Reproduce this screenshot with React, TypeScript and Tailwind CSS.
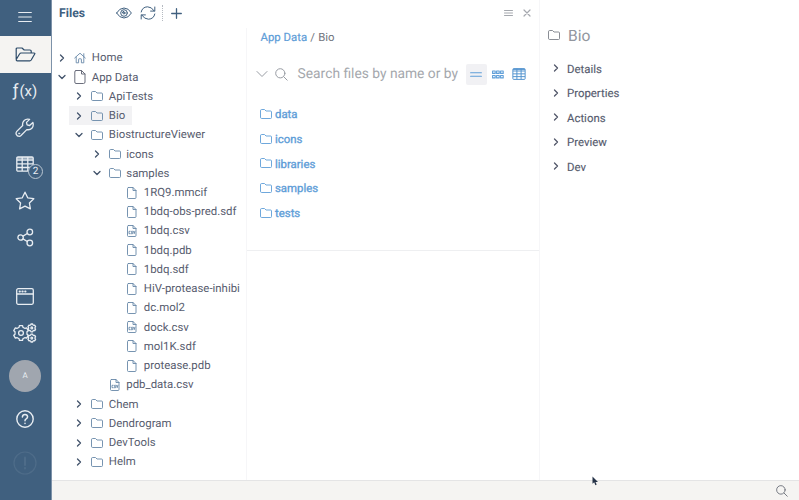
import type { ReactNode } from "react";

type IconProps = { className?: string };

function Svg({ w, h, children, className = "", sw = 1 }: { w: number; h: number; children: ReactNode; className?: string; sw?: number }) {
  return (
    <svg width={w} height={h} viewBox={`0 0 ${w} ${h}`} fill="none" stroke="currentColor" strokeWidth={sw} strokeLinecap="round" strokeLinejoin="round" className={`block shrink-0 ${className}`}>
      {children}
    </svg>
  );
}

const Chevron = ({ open, className = "" }: { open?: boolean; className?: string }) => (
  <Svg w={8} h={8} sw={1.3} className={className}>
    {open ? <path d="M1 2.5 4 5.5 7 2.5" /> : <path d="M2.5 1 5.5 4 2.5 7" />}
  </Svg>
);

const Folder = ({ className = "" }: IconProps) => (
  <Svg w={12} h={10} sw={0.9} className={className}>
    <path d="M.5 1.5Q.5.5 1.5.5H4.5L6 2H10.5Q11.5 2 11.5 3V8.5Q11.5 9.5 10.5 9.5H1.5Q.5 9.5.5 8.5Z" />
  </Svg>
);

const File = ({ csv }: { csv?: boolean }) => (
  <Svg w={10} h={12} sw={0.9}>
    <path d="M1.5.5H6L9 3.5V10.5Q9 11.5 8 11.5H1.5Q.5 11.5.5 10.5V1.5Q.5.5 1.5.5ZM6 .5V3.5H9" />
    {csv && <path strokeWidth=".9" d="M3.2 6.3H2V8.7H3.2M5.5 6.3H4.5V7.5H5.5V8.7H4.3M6.6 6.3 7.2 8.7 7.9 6.3" />}
  </Svg>
);

const BigFile = () => (
  <Svg w={12} h={14} sw={1}>
    <path d="M2 .5H7.5L11 4V12Q11 13.5 9.5 13.5H2Q.8 13.5.8 12V2Q.8.5 2 .5ZM7.5.5V4H11" />
  </Svg>
);

const Home = () => (
  <Svg w={12} h={12} sw={0.9}>
    <path d="M.7 6 6 1.2 11.3 6M2.2 5V10.8H4.6V7.3Q4.6 6.8 5.1 6.8H6.9Q7.4 6.8 7.4 7.3V10.8H9.8V5M9.8 4.4V1.7" />
  </Svg>
);

const Search = ({ size, className = "" }: { size: number; className?: string }) => (
  <svg width={size} height={size} viewBox="0 0 13 13" fill="none" stroke="currentColor" strokeWidth="1" strokeLinecap="round" className={`block shrink-0 ${className}`}>
    <circle cx="5.3" cy="5.3" r="4.6" />
    <path d="m8.8 8.8 3.4 3.4" />
  </svg>
);

const Table = ({ w, h, sw }: { w: number; h: number; sw: number }) => (
  <svg width={w} height={h} viewBox="0 0 18 16" fill="none" stroke="currentColor" strokeWidth={sw} className="block shrink-0">
    <rect x=".8" y=".8" width="16.4" height="14.4" rx="1.2" />
    <path d="M1 4H17M1 7.8H17M1 11.5H17M6.2 1V15M11.8 1V15" />
    <path d="M1 1.9H17" />
  </svg>
);

const Menu = () => <Svg w={14} h={12} sw={1.2}><path d="M.7 1.5H13.3M.7 6H13.3M.7 10.5H13.3" /></Svg>;
const OpenFolder = () => (
  <Svg w={21} h={15} sw={1.2}>
    <path d="M1.2 12V2Q1.2 1 2.2 1H7L9.2 3H15Q16.2 3 16.2 4V6M1.2 12.5 4.7 6.7Q5.1 6 6 6H19Q20.3 6 19.7 7L16.2 13Q15.7 13.8 14.8 13.8H2.2Q1.2 13.8 1.2 12.5" />
  </Svg>
);
const Wrench = () => (
  <Svg w={20} h={20} sw={1.3}>
    <path d="M17.9 4.5 14.6 7.5 12.1 6.9 11.5 4.4 14.6 1.4Q11.4.3 9.2 2.5T7.7 7.5L1.8 13.4Q.7 14.8 1.2 16.2 2 18.3 4.3 18.3 5.2 18.2 6 17.5L11.8 11.6Q14.9 12.3 16.9 10.2T17.9 4.5Z" />
    <circle cx="4.1" cy="15.5" r=".6" strokeWidth=".8" />
  </Svg>
);
const Star = () => <Svg w={20} h={19} sw={1.3}><path d="M10 1.2 12.7 6.8 18.8 7.7 14.4 12 15.4 17.9 10 15.1 4.6 17.9 5.6 12 1.2 7.7 7.3 6.8Z" /></Svg>;
const Share = () => (
  <Svg w={17} h={19} sw={1.3}>
    <circle cx="3.6" cy="9.5" r="2.7" /><circle cx="12.8" cy="4" r="2.8" /><circle cx="12.8" cy="15" r="2.8" />
    <path d="m6 8.1 4.3-2.6M6 10.9l4.3 2.6" />
  </Svg>
);
const WindowIcon = () => (
  <Svg w={18} h={17} sw={1.3}>
    <rect x=".7" y=".7" width="16.6" height="15.6" rx="1.5" />
    <path d="M1 6H17" /><path strokeWidth="1.8" d="M3.5 3.5H4M6.3 3.5H6.8M9.1 3.5H9.6" />
  </Svg>
);

function gearPath(cx: number, cy: number, r: number, teeth: number, depth: number) {
  const pts: string[] = [];
  const step = (Math.PI * 2) / teeth;
  for (let i = 0; i < teeth; i++) {
    const a = i * step - Math.PI / 2;
    [[-0.3, -depth], [-0.2, 0], [0.2, 0], [0.3, -depth]].forEach(([k, d]) => {
      pts.push(`${(cx + (r + d) * Math.cos(a + k * step)).toFixed(2)} ${(cy + (r + d) * Math.sin(a + k * step)).toFixed(2)}`);
    });
  }
  return `M${pts.join("L")}Z`;
}
const Gears = () => (
  <Svg w={24} h={20} sw={1.3}>
    <path d={gearPath(8, 10, 7.6, 6, 1.5)} /><circle cx="8" cy="10" r="2.4" />
    <path d={gearPath(18.8, 4.9, 4, 6, 0.7)} /><circle cx="18.8" cy="4.9" r=".9" />
    <path d={gearPath(18.8, 15.1, 4, 6, 0.7)} /><circle cx="18.8" cy="15.1" r=".9" />
  </Svg>
);
const Help = () => (
  <Svg w={18} h={18} sw={1.4}>
    <circle cx="9" cy="9" r="8.2" />
    <path d="M6.4 7Q6.6 4.5 9 4.5T11.6 6.8Q11.6 7.9 10.2 8.8 9 9.5 9 10.7M9 13.3V13.5" strokeWidth="1.5" />
  </Svg>
);
const Eye = () => (
  <Svg w={16} h={12} sw={1}>
    <path d="M.6 6Q3.5 1 8 1T15.4 6Q12.5 11 8 11T.6 6Z" /><circle cx="8" cy="6" r="3.3" /><circle cx="8" cy="6" r="1" /><path d="M6.4 5.5Q6.5 4.3 7.7 4.3" />
  </Svg>
);
const Refresh = () => (
  <Svg w={16} h={14} sw={1}>
    <path d="M1.2 6Q2.2 1 7.5.8 11.5.7 14.3 5M14.8 1V5.1H10.6M14.8 8Q13.8 13 8.5 13.2 4.5 13.3 1.7 9M1.2 13V8.9H5.4" />
  </Svg>
);

type Node = { label: string; level: number; kind: "home" | "app" | "folder" | "file" | "csv"; open?: boolean; selected?: boolean };
const nodes: Node[] = [
  { label: "Home", level: 0, kind: "home" },
  { label: "App Data", level: 0, kind: "app", open: true },
  { label: "ApiTests", level: 1, kind: "folder" },
  { label: "Bio", level: 1, kind: "folder", selected: true },
  { label: "BiostructureViewer", level: 1, kind: "folder", open: true },
  { label: "icons", level: 2, kind: "folder" },
  { label: "samples", level: 2, kind: "folder", open: true },
  { label: "1RQ9.mmcif", level: 3, kind: "file" },
  { label: "1bdq-obs-pred.sdf", level: 3, kind: "file" },
  { label: "1bdq.csv", level: 3, kind: "csv" },
  { label: "1bdq.pdb", level: 3, kind: "file" },
  { label: "1bdq.sdf", level: 3, kind: "file" },
  { label: "HiV-protease-inhibi", level: 3, kind: "file" },
  { label: "dc.mol2", level: 3, kind: "file" },
  { label: "dock.csv", level: 3, kind: "csv" },
  { label: "mol1K.sdf", level: 3, kind: "file" },
  { label: "protease.pdb", level: 3, kind: "file" },
  { label: "pdb_data.csv", level: 2, kind: "csv" },
  { label: "Chem", level: 1, kind: "folder" },
  { label: "Dendrogram", level: 1, kind: "folder" },
  { label: "DevTools", level: 1, kind: "folder" },
  { label: "Helm", level: 1, kind: "folder" },
];
const indents = ["pl-0", "pl-0", "pl-[17.5px]", "pl-[35px]"];

function TreeRow({ node }: { node: Node }) {
  const isFile = node.kind === "file" || node.kind === "csv";
  return (
    <div className={`flex h-[19.24px] ${node.level ? "pl-[17px]" : ""}`}>
      <div className={`flex items-center ${indents[node.level]} ${node.selected ? "bg-[#f2f2f4] pr-[7px]" : ""}`}>
        <span className="flex w-[19.8px] pl-[6px]">{!isFile && <Chevron open={node.open} className="text-[#42536b]" />}</span>
        <span className="mr-[0.5px] flex w-[19.5px] justify-center pr-[3px] text-[#6888a8]">
          {node.kind === "home" ? <Home /> : node.kind === "app" ? <span className="text-[#6b6e7c]"><BigFile /></span> : isFile ? <File csv={node.kind === "csv"} /> : <Folder />}
        </span>
        <span className="whitespace-nowrap">{node.label}</span>
      </div>
    </div>
  );
}

function NavItem({ children, className = "h-[36.7px]" }: { children: ReactNode; className?: string }) {
  return <div className={`flex w-full shrink-0 items-center justify-center pr-[1px] ${className}`}>{children}</div>;
}

function Sidebar() {
  return (
    <nav className="flex w-[52px] shrink-0 flex-col border-r border-[#7d92a9] bg-[#40607f] text-[#e8edf2]">
      <NavItem className="h-[34px]"><Menu /></NavItem>
      <NavItem className="mt-[2px] h-[36.5px] bg-[#f5f4f2] text-[#2c4a68]"><OpenFolder /></NavItem>
      <NavItem><span className="pt-[1px] text-[15px] leading-none"><span className="mr-[1px] text-[17px]">ƒ</span>(x)</span></NavItem>
      <NavItem><Wrench /></NavItem>
      <NavItem>
        <span className="relative">
          <Table w={18} h={16} sw={1.3} />
          <span className="absolute -right-[9px] top-[7.5px] flex size-[15px] items-center justify-center rounded-full border border-[#b9c6d2] bg-[#40607f] pt-[1px] text-[10px]">2</span>
        </span>
      </NavItem>
      <NavItem><Star /></NavItem>
      <NavItem><Share /></NavItem>
      <NavItem className="mt-[22px] h-[36.7px]"><WindowIcon /></NavItem>
      <NavItem className="h-[37.7px]"><Gears /></NavItem>
      <NavItem className="h-[48px]"><span className="flex size-[32px] items-center justify-center rounded-full bg-[#a0a6af] text-[8px] text-[#e8edf2]">A</span></NavItem>
      <NavItem className="h-[38px]"><Help /></NavItem>
      <NavItem className="h-[50px]"><Svg w={24} h={24} sw={1.2} className="text-[#4e6c89]"><circle cx="12" cy="12" r="11" /><path d="M12 6.5V14M12 17V17.5" strokeWidth="2" /></Svg></NavItem>
    </nav>
  );
}

const folders = ["data", "icons", "libraries", "samples", "tests"];
const sections = ["Details", "Properties", "Actions", "Preview", "Dev"];

export default function App() {
  return (
    <div className="flex h-[500px] w-[799px] overflow-hidden bg-white font-[Roboto,'Liberation_Sans',sans-serif] text-[11.4px] text-[#585d6f] [text-rendering:geometricPrecision]">
      <Sidebar />
      <div className="relative flex min-w-0 flex-1 flex-col">
        <main className="flex min-h-0 flex-1">
          <aside className="flex w-[195px] flex-col">
            <header className="flex h-[26px] items-center pl-[7px] text-[#40607f]">
              <h1 className="w-[57px] text-[12.2px] font-bold">Files</h1>
              <Eye />
              <span className="ml-[8.4px]"><Refresh /></span>
              <span className="ml-[6px] h-[16px] border-l border-dotted border-[#b5bac1]" />
              <span className="ml-[8px]"><Svg w={11} h={11} sw={1.3}><path d="M5.5.7V10.3M.7 5.5H10.3" /></Svg></span>
            </header>
            <div className="mt-[2px] flex-1 overflow-hidden border-r border-[#f6f6f8] pt-[20.3px]">
              {nodes.map((n) => <TreeRow key={n.label} node={n} />)}
            </div>
          </aside>

          <section className="flex w-[293px] flex-col border-r border-[#f6f6f8]">
            <div className="flex h-[26px] items-center justify-end gap-[10px] pr-[8px] text-[#a5a8ae]">
              <Svg w={9} h={8}><path d="M.5 1.5H8.5M.5 4H8.5M.5 6.5H8.5" /></Svg>
              <Svg w={8} h={8} sw={1.2}><path d="m1 1 6 6M7 1 1 7" /></Svg>
            </div>
            <div className="flex h-[23px] items-center gap-[3.2px] pl-[13.5px] pt-[1px] text-[#72757e]">
              <span className="text-[#5f9ed8] [-webkit-text-stroke:0.2px]">App Data</span><span>/</span><span>Bio</span>
            </div>
            <div className="mt-[13px] flex h-[24px] items-center pl-[9px] text-[#989ca3]">
              <Svg w={12} h={8}><path d="M1 1.5 6 6.5 11 1.5" /></Svg>
              <Search size={13} className="ml-[7px]" />
              <span className="ml-[9.6px] w-[162px] whitespace-nowrap pt-[1px] text-[13.8px] text-[#a5a8ad]">Search files by name or by</span>
              <span className="ml-[6px] flex h-[21px] w-[21px] items-center justify-center rounded-[2px] bg-[#f1f1f4] text-[#5f9ed8]">
                <Svg w={12} h={5} sw={1.1}><path d="M.6.8H11.4M.6 4.2H11.4" /></Svg>
              </span>
              <span className="ml-[5px] text-[#5f9ed8]">
                <Svg w={12} h={9} sw={1.1}>
                  {[0.6, 4.6, 8.6].map((x) => <g key={x}><rect x={x} y="1" width="2.6" height="2.4" /><rect x={x} y="5.5" width="2.6" height="2.4" /></g>)}
                </Svg>
              </span>
              <span className="ml-[8px] text-[#5293cf]"><Table w={14} h={12} sw={1.3} /></span>
            </div>
            <div className="mt-[16.5px] flex flex-col pl-[13.4px] text-[#5f9ed8]">
              {folders.map((f) => (
                <div key={f} className="flex h-[24.7px] items-center gap-[2.6px] [-webkit-text-stroke:0.35px]"><Folder className="relative bottom-[1px]" />{f}</div>
              ))}
            </div>
            <div className="mt-[24px] border-t border-[#eeeff1]" />
          </section>

          <aside className="min-w-0 flex-1 pl-[8px] pt-[23px]">
            <h2 className="flex h-[26px] items-center gap-[8px] pt-[1px] text-[15.6px] text-[#92969e]">
              <span className="pb-[3px] text-[#7d8189]"><Folder /></span>Bio
            </h2>
            <div className="mt-[8px]">
              {sections.map((s) => (
                <div key={s} className="flex h-[24.5px] items-center gap-[7px] pl-[4px] [-webkit-text-stroke:0.15px]">
                  <Chevron className="relative bottom-[1px] text-[#52576a]" />{s}
                </div>
              ))}
            </div>
          </aside>
        </main>
        <footer className="flex h-[20px] shrink-0 items-center justify-end border-t border-[#e4e4e5] bg-[#f5f4f2] pr-[11px] text-[#6d717b]"><Search size={12} /></footer>
        <svg width="7" height="10" viewBox="0 0 7 10" className="absolute left-[540px] top-[476px] text-[#253247]"><path d="M.5.5V7.8L2.2 6.3 3.4 9.2 4.7 8.6 3.5 5.9H6Z" fill="currentColor" /></svg>
      </div>
    </div>
  );
}
